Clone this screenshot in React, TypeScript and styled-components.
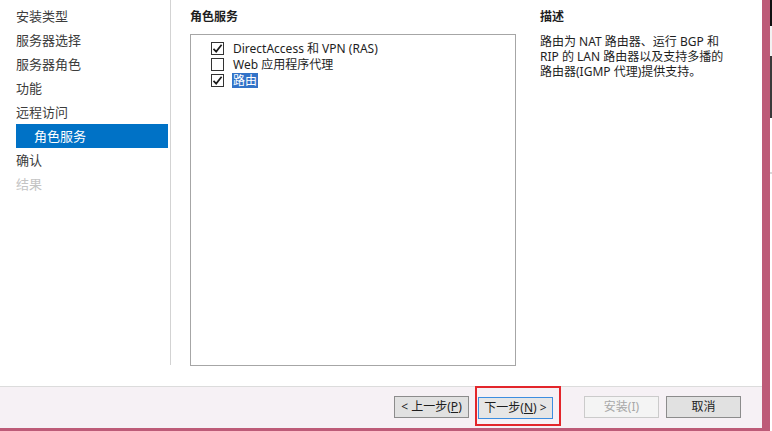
import { memo } from "react";
import styled, { createGlobalStyle, css } from "styled-components";

const GlobalStyle = createGlobalStyle`
    html, body {
        margin: 0;
        padding: 0;
        background: #ffffff;
    }
    body {
        font-family: "Noto Sans", "Noto Sans CJK SC", sans-serif;
        color: #1e1e1e;
    }
`;

const Screen = styled.div`
    width: 772px;
    height: 431px;
    display: flex;
    overflow: hidden;
`;

const WizardWindow = styled.div`
    width: 762px;
    height: 428px;
    border-right: 8px solid #bd5b78;
    border-bottom: 3px solid #bd5b78;
    display: flex;
    flex-direction: column;
    background: #ffffff;
`;

const BehindStrip = styled.div`
    width: 2px;
    height: 431px;
    background: linear-gradient(
        to bottom,
        #101010 0px, #101010 26px,
        #f2f2f2 26px, #f2f2f2 56px,
        #3a3a3a 56px, #3a3a3a 118px,
        #ffffff 118px, #ffffff 172px,
        #d8d8d8 172px, #d8d8d8 174px,
        #ffffff 174px
    );
`;

const Body = styled.div`
    flex: 1;
    display: flex;
    min-height: 0;
`;

const Sidebar = styled.nav`
    width: 171px;
    height: 365px;
    box-sizing: border-box;
    padding: 4px 2px 0 16px;
    border-right: 1px solid #d3d3d3;
    display: flex;
    flex-direction: column;
`;

const NavItem = styled.div<{ selected?: boolean; disabled?: boolean }>`
    height: 24px;
    line-height: 24px;
    font-size: 13px;
    color: #3c3c3c;
    white-space: nowrap;
    ${({ selected }) => !!selected && css`
        background: #0072c6;
        color: #ffffff;
        padding-left: 18px;
    `}
    ${({ disabled }) => !!disabled && css`
        color: #c4c4c4;
    `}
`;

const Content = styled.section`
    flex: 1;
    display: grid;
    grid-template-columns: 326px 1fr;
    column-gap: 24px;
    padding: 8px 22px 0 19px;
`;

const Column = styled.div`
    display: flex;
    flex-direction: column;
`;

const SectionTitle = styled.h5`
    margin: 0;
    height: 26px;
    font-size: 12px;
    font-weight: bold;
    line-height: 18px;
    color: #1e1e1e;
`;

const ListBox = styled.div`
    width: 326px;
    height: 332px;
    box-sizing: border-box;
    border: 1px solid #a6a6a6;
    padding: 5px 0 0 20px;
    display: flex;
    flex-direction: column;
`;

const CheckRow = styled.label`
    height: 16px;
    display: flex;
    align-items: center;
    column-gap: 9px;
    font-size: 12px;
    color: #1e1e1e;
    white-space: nowrap;
`;

const CheckBox = styled.span`
    width: 13px;
    height: 13px;
    box-sizing: border-box;
    border: 1px solid #333333;
    background: #ffffff;
    display: flex;
    align-items: center;
    justify-content: center;
    flex-shrink: 0;
`;

const CheckLabel = styled.span<{ highlighted?: boolean }>`
    line-height: 15px;
    ${({ highlighted }) => !!highlighted && css`
        background: #3273c8;
        color: #ffffff;
        padding: 0 1px;
        margin-left: -1px;
    `}
`;

const Description = styled.p`
    margin: 0;
    font-size: 12px;
    line-height: 15px;
    color: #1e1e1e;
    width: 188px;
`;

const Footer = styled.footer`
    height: 42px;
    box-sizing: border-box;
    border-top: 1px solid #dcdcdc;
    background: #f6f1f5;
    display: flex;
    align-items: center;
    justify-content: flex-end;
    padding: 0 21px 2px 0;
`;

const Button = styled.button<{ primary?: boolean }>`
    width: 75px;
    height: 22px;
    box-sizing: border-box;
    border: 1px solid #8c8c8c;
    background: #e1e1e1;
    font-family: "Noto Sans", "Noto Sans CJK SC", sans-serif;
    font-size: 12px;
    color: #1e1e1e;
    padding: 0;
    line-height: 20px;
    u {
        text-decoration: underline;
    }
    &:disabled {
        background: #f4f4f4;
        border-color: #cbcbcb;
        color: #a8a8a8;
    }
    ${({ primary }) => !!primary && css`
        border-color: #3d8ee0;
        background: #e6e6e6;
    `}
`;

const Highlighted = styled.div`
    position: relative;
    margin-left: 9px;
    margin-right: 31px;
    &::after {
        content: "";
        position: absolute;
        left: -3px;
        top: -9px;
        right: -8px;
        bottom: -7px;
        border: 2px solid #e3262b;
        pointer-events: none;
    }
`;

const Spacer = styled.div<{ w: number }>`
    width: ${({ w }) => w}px;
`;

const Tick = () => (
    <svg width="11" height="11" viewBox="0 0 11 11">
        <path d="M1.5 5.8 L4.2 8.6 L9.6 1.8" fill="none" stroke="#1a1a1a" strokeWidth="1.7" />
    </svg>
);

const navItems = [
    { name: "安装类型" },
    { name: "服务器选择" },
    { name: "服务器角色" },
    { name: "功能" },
    { name: "远程访问" },
    { name: "角色服务", selected: true },
    { name: "确认" },
    { name: "结果", disabled: true },
];

const services = [
    { name: "DirectAccess 和 VPN (RAS)", checked: true },
    { name: "Web 应用程序代理", checked: false },
    { name: "路由", checked: true, highlighted: true },
];

const App = memo(() => {
    return (
        <>
            <GlobalStyle />
            <Screen>
                <WizardWindow>
                    <Body>
                        <Sidebar>
                            {navItems.map((item) => (
                                <NavItem key={item.name} selected={item.selected} disabled={item.disabled}>
                                    {item.name}
                                </NavItem>
                            ))}
                        </Sidebar>
                        <Content>
                            <Column>
                                <SectionTitle>角色服务</SectionTitle>
                                <ListBox>
                                    {services.map((s) => (
                                        <CheckRow key={s.name}>
                                            <CheckBox>{s.checked && <Tick />}</CheckBox>
                                            <CheckLabel highlighted={s.highlighted}>{s.name}</CheckLabel>
                                        </CheckRow>
                                    ))}
                                </ListBox>
                            </Column>
                            <Column>
                                <SectionTitle>描述</SectionTitle>
                                <Description>
                                    路由为 NAT 路由器、运行 BGP 和 RIP 的 LAN 路由器以及支持多播的路由器(IGMP 代理)提供支持。
                                </Description>
                            </Column>
                        </Content>
                    </Body>
                    <Footer>
                        <Button>&lt; 上一步(<u>P</u>)</Button>
                        <Highlighted>
                            <Button primary>下一步(<u>N</u>) &gt;</Button>
                        </Highlighted>
                        <Button disabled>安装(I)</Button>
                        <Spacer w={7} />
                        <Button>取消</Button>
                    </Footer>
                </WizardWindow>
                <BehindStrip />
            </Screen>
        </>
    );
});

export default App;
